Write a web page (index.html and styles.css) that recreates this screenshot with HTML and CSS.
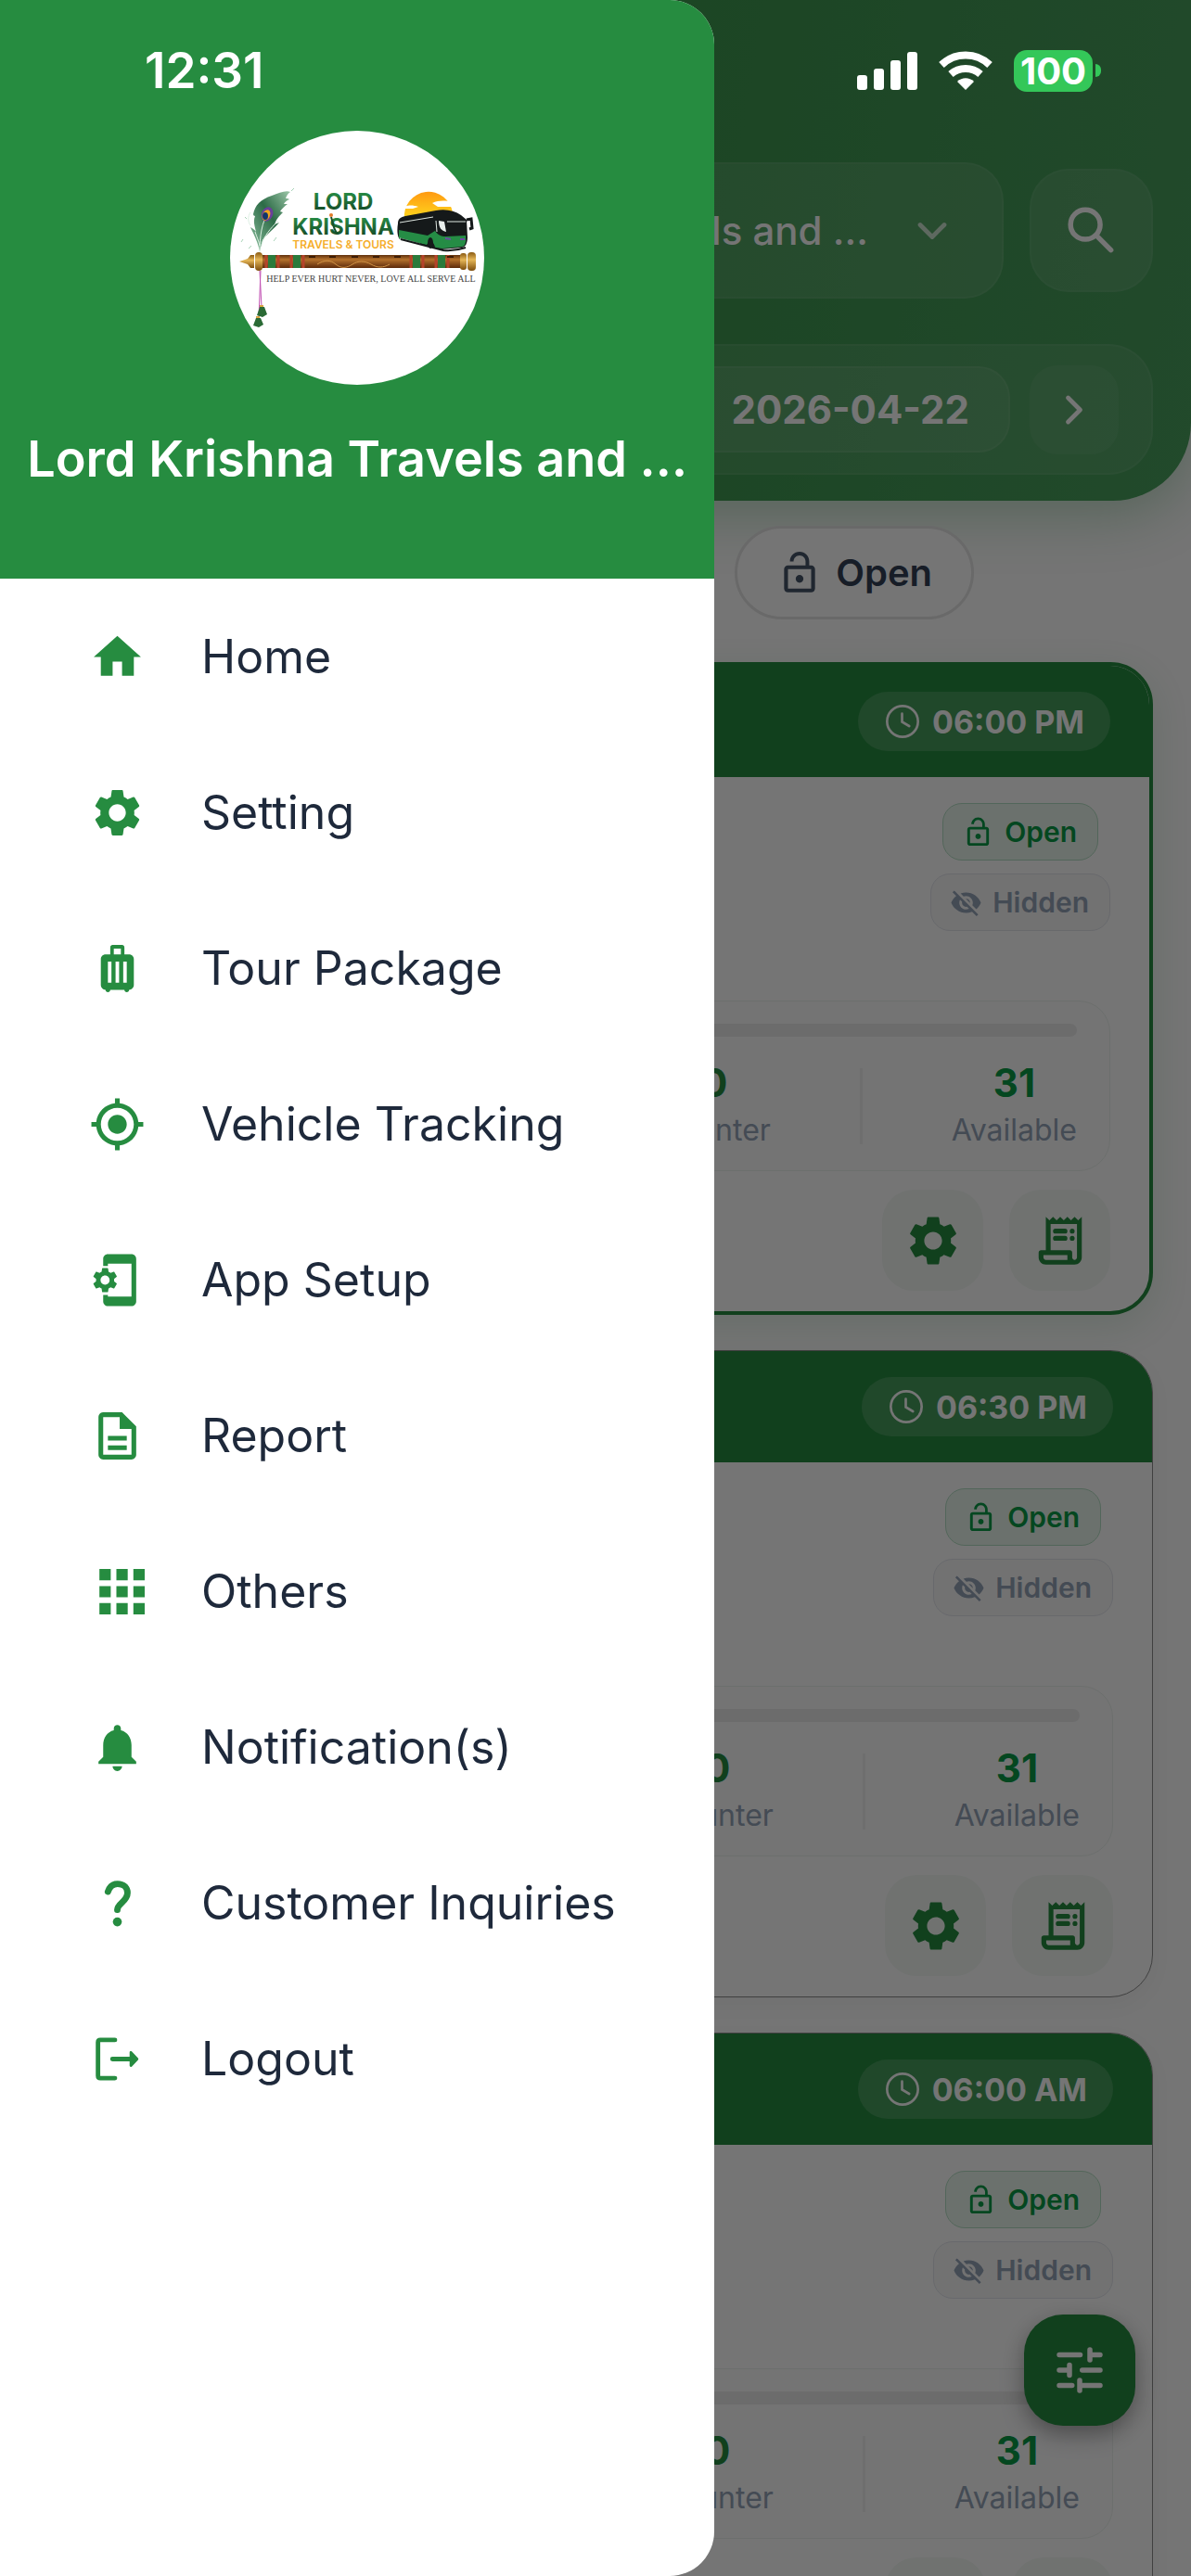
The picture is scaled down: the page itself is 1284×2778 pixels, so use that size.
FILE: index.html
```html
<!DOCTYPE html>
<html lang="en">
<head>
<meta charset="utf-8">
<meta name="viewport" content="width=device-width, initial-scale=1">
<title>Lord Krishna Travels and Tours</title>
<link rel="stylesheet" href="styles.css">
</head>
<body>
<svg class="sprite" aria-hidden="true">
  <symbol id="i-home" viewBox="0 0 24 24"><path d="M10 20v-6h4v6h5v-8h3L12 3 2 12h3v8z"/></symbol>
  <symbol id="i-gear" viewBox="0 0 24 24"><path d="M19.14 12.94c.04-.3.06-.61.06-.94 0-.32-.02-.64-.07-.94l2.03-1.58c.18-.14.23-.41.12-.61l-1.92-3.32c-.12-.22-.37-.29-.59-.22l-2.39.96c-.5-.38-1.03-.7-1.62-.94l-.36-2.54c-.04-.24-.24-.41-.48-.41h-3.84c-.24 0-.43.17-.47.41l-.36 2.54c-.59.24-1.13.57-1.62.94l-2.39-.96c-.22-.08-.47 0-.59.22L2.74 8.87c-.12.21-.08.47.12.61l2.03 1.58c-.05.3-.09.63-.09.94s.02.64.07.94l-2.03 1.58c-.18.14-.23.41-.12.61l1.92 3.32c.12.22.37.29.59.22l2.39-.96c.5.38 1.03.7 1.62.94l.36 2.54c.05.24.24.41.48.41h3.84c.24 0 .44-.17.47-.41l.36-2.54c.59-.24 1.13-.56 1.62-.94l2.39.96c.22.08.47 0 .59-.22l1.92-3.32c.12-.22.07-.47-.12-.61l-2.01-1.58zM12 15.6c-1.98 0-3.6-1.62-3.6-3.6s1.62-3.6 3.6-3.6 3.6 1.62 3.6 3.6-1.62 3.6-3.6 3.6z"/></symbol>
  <symbol id="i-luggage" viewBox="0 0 24 24"><path d="M17 6h-2V3c0-.55-.45-1-1-1h-4c-.55 0-1 .45-1 1v3H7c-1.1 0-2 .9-2 2v11c0 1.1.9 2 2 2 0 .55.45 1 1 1s1-.45 1-1h6c0 .55.45 1 1 1s1-.45 1-1c1.1 0 2-.9 2-2V8c0-1.1-.9-2-2-2zM9.5 18H8V9h1.5v9zm3.25 0h-1.5V9h1.5v9zm.75-12h-3V3.5h3V6zM16 18h-1.5V9H16v9z"/></symbol>
  <symbol id="i-target" viewBox="0 0 24 24"><path d="M12 8c-2.21 0-4 1.79-4 4s1.79 4 4 4 4-1.79 4-4-1.79-4-4-4zm8.94 3c-.46-4.17-3.77-7.48-7.94-7.94V1h-2v2.06C6.83 3.52 3.52 6.83 3.06 11H1v2h2.06c.46 4.17 3.77 7.48 7.94 7.94V23h2v-2.06c4.17-.46 7.48-3.77 7.94-7.94H23v-2h-2.06zM12 19c-3.87 0-7-3.13-7-7s3.13-7 7-7 7 3.13 7 7-3.13 7-7 7z"/></symbol>
  <symbol id="i-app" viewBox="0 0 24 24"><path d="M8 1h10c1.1 0 2 .9 2 2v18c0 1.1-.9 2-2 2H8c-1.1 0-2-.9-2-2v-2.7h2v.7h10V5H8v1H6V3c0-1.1.9-2 2-2z"/><use href="#i-gear" x="0.4" y="5.6" width="12.8" height="12.8"/></symbol>
  <symbol id="i-report" viewBox="0 0 24 24"><path d="M8 16h8v2H8zm0-4h8v2H8zm6-10H6c-1.1 0-2 .9-2 2v16c0 1.1.89 2 1.99 2H18c1.1 0 2-.9 2-2V8l-6-6zm4 18H6V4h7v5h5v11z"/></symbol>
  <symbol id="i-grid" viewBox="0 0 24 24"><path d="M4.4 2.4h4.8v4.8H4.4zM11.6 2.4h4.8v4.8h-4.8zM18.8 2.4h4.8v4.8h-4.8zM4.4 9.6h4.8v4.8H4.4zM11.6 9.6h4.8v4.8h-4.8zM18.8 9.6h4.8v4.8h-4.8zM4.4 16.8h4.8v4.8H4.4zM11.6 16.8h4.8v4.8h-4.8zM18.8 16.8h4.8v4.8h-4.8z"/></symbol>
  <symbol id="i-bell" viewBox="0 0 24 24"><path d="M12 22c1.1 0 2-.9 2-2h-4c0 1.1.89 2 2 2zm6-6v-5c0-3.07-1.64-5.64-4.5-6.32V4c0-.83-.67-1.5-1.5-1.5s-1.5.67-1.5 1.5v.68C7.63 5.36 6 7.92 6 11v5l-2 2v1h16v-1l-2-2z"/></symbol>
  <symbol id="i-question" viewBox="0 0 24 24"><path d="M8 7.1C8.700 5 10 3.800 12.100 3.800c2.500 0 4.200 1.500 4.200 3.800 0 3.700-4.200 4.300-4.300 7.200" fill="none" stroke="currentColor" stroke-width="2.700" stroke-linecap="round"/><circle cx="12" cy="19.900" r="1.900"/></symbol>
  <symbol id="i-logout" viewBox="0 0 24 24"><path d="M11 3.900H4.800c-.6 0-1 .4-1 1v14.200c0 .6.4 1 1 1H11M9.900 12H18" fill="none" stroke="currentColor" stroke-width="1.900" stroke-linecap="round"/><path d="M17.200 9.200c0-.5.500-.7.900-.4l2.600 2.700c.3.300.3.700 0 1l-2.600 2.700c-.4.300-.9.100-.9-.4z"/></symbol>
  <symbol id="i-unlock" viewBox="0 0 24 24"><path d="M12 17c1.100 0 2-.9 2-2s-.9-2-2-2-2 .9-2 2 .9 2 2 2zm6-9h-1V6c0-2.760-2.240-5-5-5S7 3.240 7 6h1.900c0-1.710 1.390-3.100 3.100-3.100 1.710 0 3.100 1.390 3.100 3.100v2H6c-1.100 0-2 .9-2 2v10c0 1.100.9 2 2 2h12c1.100 0 2-.9 2-2V10c0-1.100-.9-2-2-2zm0 12H6V10h12v10z"/></symbol>
  <symbol id="i-hidden" viewBox="0 0 24 24"><path d="M12 7c2.760 0 5 2.240 5 5 0 .65-.13 1.260-.36 1.830l2.920 2.920c1.510-1.260 2.700-2.890 3.430-4.750-1.730-4.390-6-7.500-11-7.500-1.400 0-2.740.25-3.980.7l2.160 2.160C10.740 7.130 11.350 7 12 7zM2 4.270l2.280 2.280.46.46C3.080 8.300 1.780 10.020 1 12c1.730 4.390 6 7.500 11 7.500 1.550 0 3.030-.3 4.380-.84l.42.42L19.730 22 21 20.730 3.270 3 2 4.270zM7.530 9.800l1.550 1.550c-.05.21-.08.43-.08.65 0 1.660 1.340 3 3 3 .22 0 .44-.03.65-.08l1.550 1.550c-.67.33-1.410.53-2.200.53-2.760 0-5-2.240-5-5 0-.79.2-1.530.53-2.200zm4.310-.78l3.150 3.150.02-.16c0-1.660-1.340-3-3-3l-.17.01z"/></symbol>
  <symbol id="i-receipt" viewBox="0 0 24 24"><path d="M19.500 3.500L18 2l-1.500 1.500L15 2l-1.500 1.500L12 2l-1.500 1.500L9 2 7.500 3.500 6 2v14H4c-.6 0-1 .4-1 1v2c0 1.660 1.340 3 3 3h12c1.660 0 3-1.340 3-3V2l-1.500 1.500zM15 20H6c-.55 0-1-.45-1-1v-1h10v2zm4-1c0 .55-.45 1-1 1s-1-.45-1-1v-2c0-.6-.4-1-1-1H8V5h11v14z"/><path d="M10 8h4M10 11h4M17 8h.01M17 11h.01" stroke="currentColor" stroke-width="2" stroke-linecap="round"/></symbol>
  <symbol id="i-clock" viewBox="0 0 24 24"><path d="M12 2a10 10 0 1 0 0 20 10 10 0 0 0 0-20zM11.700 7v5.300l4.600 2.700" fill="none" stroke="currentColor" stroke-width="1.600" stroke-linecap="round"/></symbol>
  <symbol id="i-search" viewBox="0 0 24 24"><path d="M9.500 3.700a5.800 5.800 0 1 0 0 11.600 5.800 5.800 0 0 0 0-11.600zM14.600 14.600l4.900 4.900" fill="none" stroke="currentColor" stroke-width="2" stroke-linecap="round"/></symbol>
  <symbol id="i-down" viewBox="0 0 24 24"><path d="M6 9l6 6 6-6" fill="none" stroke="currentColor" stroke-width="2.200" stroke-linecap="round" stroke-linejoin="round"/></symbol>
  <symbol id="i-right" viewBox="0 0 24 24"><path d="M9 6l6 6-6 6" fill="none" stroke="currentColor" stroke-width="2.200" stroke-linecap="round" stroke-linejoin="round"/></symbol>
  <symbol id="i-left" viewBox="0 0 24 24"><path d="M15 6l-6 6 6 6" fill="none" stroke="currentColor" stroke-width="2.200" stroke-linecap="round" stroke-linejoin="round"/></symbol>
  <symbol id="i-tune" viewBox="0 0 24 24"><path d="M4 6h8.200M20 6h-4M16 4v4M4 12h4M8 10v4M13 12h7M4 18h5M12 16v4M12 18h8" fill="none" stroke="currentColor" stroke-width="2" stroke-linecap="round"/></symbol>
</svg>

<div class="screen">
  <main class="app">
    <header class="topbar">
      <div class="topbar-row">
        <button class="company" type="button"><span>Travels and …</span><svg class="icon-52"><use href="#i-down"/></svg></button>
        <button class="search" type="button" aria-label="Search"><svg class="icon-66"><use href="#i-search"/></svg></button>
      </div>
      <div class="date-row">
        <button class="step" type="button" aria-label="Previous day"><svg class="icon-52"><use href="#i-left"/></svg></button>
        <button class="date" type="button">2026-04-22</button>
        <button class="step" type="button" aria-label="Next day"><svg class="icon-52"><use href="#i-right"/></svg></button>
      </div>
    </header>

    <div class="filters">
      <button class="chip" type="button"><svg class="icon-50"><use href="#i-unlock"/></svg>Open</button>
    </div>

    <div class="trips">
      <article class="trip trip-active">
        <div class="trip-head"><span class="time"><svg class="icon-40"><use href="#i-clock"/></svg>06:00 PM</span></div>
        <div class="trip-body">
          <div class="tags">
            <span class="tag tag-open"><svg class="icon-35"><use href="#i-unlock"/></svg>Open</span>
            <span class="tag tag-hidden"><svg class="icon-35"><use href="#i-hidden"/></svg>Hidden</span>
          </div>
          <div class="seats">
            <div class="seat-bar"></div>
            <div class="seat-stats">
              <div class="stat"><strong>0</strong><span>Counter</span></div>
              <div class="stat-line"></div>
              <div class="stat stat-free"><strong>31</strong><span>Available</span></div>
            </div>
          </div>
          <div class="actions">
            <button type="button" aria-label="Trip settings"><svg class="icon-64"><use href="#i-gear"/></svg></button>
            <button type="button" aria-label="Trip receipt"><svg class="icon-60"><use href="#i-receipt"/></svg></button>
          </div>
        </div>
      </article>

      <article class="trip">
        <div class="trip-head"><span class="time"><svg class="icon-40"><use href="#i-clock"/></svg>06:30 PM</span></div>
        <div class="trip-body">
          <div class="tags">
            <span class="tag tag-open"><svg class="icon-35"><use href="#i-unlock"/></svg>Open</span>
            <span class="tag tag-hidden"><svg class="icon-35"><use href="#i-hidden"/></svg>Hidden</span>
          </div>
          <div class="seats">
            <div class="seat-bar"></div>
            <div class="seat-stats">
              <div class="stat"><strong>0</strong><span>Counter</span></div>
              <div class="stat-line"></div>
              <div class="stat stat-free"><strong>31</strong><span>Available</span></div>
            </div>
          </div>
          <div class="actions">
            <button type="button" aria-label="Trip settings"><svg class="icon-64"><use href="#i-gear"/></svg></button>
            <button type="button" aria-label="Trip receipt"><svg class="icon-60"><use href="#i-receipt"/></svg></button>
          </div>
        </div>
      </article>

      <article class="trip">
        <div class="trip-head"><span class="time"><svg class="icon-40"><use href="#i-clock"/></svg>06:00 AM</span></div>
        <div class="trip-body">
          <div class="tags">
            <span class="tag tag-open"><svg class="icon-35"><use href="#i-unlock"/></svg>Open</span>
            <span class="tag tag-hidden"><svg class="icon-35"><use href="#i-hidden"/></svg>Hidden</span>
          </div>
          <div class="seats">
            <div class="seat-bar"></div>
            <div class="seat-stats">
              <div class="stat"><strong>0</strong><span>Counter</span></div>
              <div class="stat-line"></div>
              <div class="stat stat-free"><strong>31</strong><span>Available</span></div>
            </div>
          </div>
          <div class="actions">
            <button type="button" aria-label="Trip settings"><svg class="icon-64"><use href="#i-gear"/></svg></button>
            <button type="button" aria-label="Trip receipt"><svg class="icon-60"><use href="#i-receipt"/></svg></button>
          </div>
        </div>
      </article>
    </div>

    <button class="fab" type="button" aria-label="Filters"><svg class="icon-66"><use href="#i-tune"/></svg></button>
  </main>

  <div class="scrim"></div>

  <aside class="drawer">
    <div class="profile">
      <div class="avatar">
        <svg viewBox="0 0 274 274" role="img" aria-label="Lord Krishna Travels &amp; Tours">
          <defs>
            <linearGradient id="leaf" x1="0" y1="0" x2="0" y2="1"><stop offset="0" stop-color="#2b9a4b"/><stop offset="1" stop-color="#123d22"/></linearGradient>
            <linearGradient id="sun" x1="0" y1="0" x2="0" y2="1"><stop offset="0" stop-color="#ff9a12"/><stop offset="1" stop-color="#ffe01f"/></linearGradient>
            <linearGradient id="wood" x1="0" y1="0" x2="0" y2="1"><stop offset="0" stop-color="#5f300c"/><stop offset=".35" stop-color="#b4712c"/><stop offset="1" stop-color="#5c2a0b"/></linearGradient>
            <linearGradient id="brass" x1="0" y1="0" x2="0" y2="1"><stop offset="0" stop-color="#8a5a12"/><stop offset=".4" stop-color="#e6b758"/><stop offset="1" stop-color="#7d4d0d"/></linearGradient>
            <linearGradient id="plume" x1="1" y1="0" x2="0" y2="1"><stop offset="0" stop-color="#9cc7a8"/><stop offset=".45" stop-color="#2c6b46"/><stop offset="1" stop-color="#8fc2a2"/></linearGradient>
          </defs>
          <!-- peacock feather -->
          <path d="M32 130C29 117 25 111 22 104c3 2 5 3 6 5-2-8-3-12-1-17-1 0-2-1-2-2 2-10 8-16 20-20 8-3 15-6 20-4-3 2-4 4-5 7 2 0 3 0 4 1-3 1-5 3-6 5l4 0c-3 2-6 5-8 8l3 1c-4 4-7 7-9 13l5-2c-7 8-14 13-18 19z" fill="url(#plume)"/>
          <path d="M32 131c0-17 2-32 10-45M27 109c2 6 4 10 5 15M52 97c-9 9-15 16-18 26M22 88c-3 4-3 10 0 14" fill="none" stroke="#dcefe2" stroke-width="1"/>
          <path d="M66 65l3-3M16 93l2 2M14 117l-2 3M47 119l3-4M20 127l3-3" stroke="#a9d3b8" stroke-width="1"/>
          <ellipse cx="40" cy="90" rx="6" ry="8" transform="rotate(25 40 90)" fill="#6a3f9b"/>
          <ellipse cx="39" cy="91" rx="4" ry="6" transform="rotate(25 39 91)" fill="#f0a51e"/>
          <ellipse cx="38" cy="92" rx="3" ry="4" fill="#12356e"/>
          <!-- wordmark -->
          <text x="122" y="85" text-anchor="middle" class="mark-name">LORD</text>
          <text x="122" y="112" text-anchor="middle" class="mark-name">KRISHNA</text>
          <path d="M109 93c2 6 2 12 6 17" fill="none" stroke="#16502b" stroke-width="2"/>
          <circle cx="109" cy="91" r="2" fill="#e07b2a"/>
          <text x="122" y="127" text-anchor="middle" class="mark-sub">TRAVELS &amp; TOURS</text>
          <!-- sun and bus -->
          <path d="M188 95a26 26 0 0 1 52-6v10h-52z" fill="url(#sun)"/>
          <path d="M187 82c6-2 10-2 16 0l-6 2h-12zM218 78c7-3 14-3 22-1l4 5h-20z" fill="#fff"/>
          <path d="M181 100c0-5 3-7 8-8l33-6c10-2 20 0 27 5l6 5 1 19c0 6-2 10-6 11l-22 2-37-9-8-2c-3-3-3-11-2-17z" fill="#15191a"/>
          <path d="M182 107l31 6 8-5c3 4 6 6 12 6l21-1c1 7-1 12-4 12l-21 2-8-1c-1-7-6-9-9-3l-30-7z" fill="#258c45"/>
          <path d="M183 99l36-6M222 97l1 12M234 98l20 0M183 116l22 6" stroke="#dfe8e2" stroke-width="1" fill="none"/>
          <path d="M225 97l6 1 2 11c-5-1-8-4-8-12z" fill="#e9efec"/>
          <path d="M255 96l5-1 1 10-3 1" fill="none" stroke="#15191a" stroke-width="3"/>
          <path d="M232 115l6 1v2l-6-1zM248 116h5v2h-5z" fill="#6c4aa3"/>
          <path d="M184 117l46 12c10 1 18-1 24-3" fill="none" stroke="#15191a" stroke-width="2"/>
          <ellipse cx="216" cy="121" rx="3" ry="6" fill="#15191a"/>
          <!-- flute -->
          <rect x="30" y="134" width="220" height="14" fill="url(#wood)"/>
          <path d="M10 141l9-3 3-4h4v14h-4l-3-4z" fill="url(#brass)"/>
          <rect x="27" y="131" width="8" height="20" rx="4" fill="url(#brass)"/>
          <rect x="248" y="132" width="7" height="18" rx="3" fill="url(#brass)"/>
          <rect x="256" y="131" width="9" height="20" rx="4" fill="url(#brass)"/>
          <path d="M39 134v14M52 134v14M66 134v14M79 134v14M195 134v14M208 134v14M222 134v14M235 134v14" stroke="#b5432b" stroke-width="3"/>
          <path d="M45 134v14M72 134v14M201 134v14M228 134v14" stroke="#2c7a3c" stroke-width="8"/>
          <path d="M85 136h7M107 136h7M131 136h7M154 136h7M177 136h7M234 136h7" stroke="#3c1c06" stroke-width="2"/>
          <path d="M94 144c8-5 14-5 20 0s12 4 18 0 13-4 20 0 13 4 20 0" fill="none" stroke="#d09245" stroke-width="1"/>
          <!-- tassels -->
          <path d="M33 151l-2 50M32 151l2 39" stroke="#c253b4" stroke-width="1" fill="none"/>
          <path d="M32 190h5l3 8-5 3-6-2zM28 202h5l3 7-5 3-6-2z" fill="#2a6a35"/>
          <path d="M32 189h4M28 201h4" stroke="#d9a441" stroke-width="2"/>
          <text x="152" y="163" text-anchor="middle" class="mark-motto">HELP EVER HURT NEVER, LOVE ALL SERVE ALL</text>
        </svg>
      </div>
      <h1>Lord Krishna Travels and …</h1>
    </div>
    <nav class="menu">
      <a href="#home"><svg><use href="#i-home"/></svg>Home</a>
      <a href="#setting"><svg><use href="#i-gear"/></svg>Setting</a>
      <a href="#tour"><svg><use href="#i-luggage"/></svg>Tour Package</a>
      <a href="#tracking"><svg><use href="#i-target"/></svg>Vehicle Tracking</a>
      <a href="#app"><svg><use href="#i-app"/></svg>App Setup</a>
      <a href="#report"><svg><use href="#i-report"/></svg>Report</a>
      <a href="#others"><svg><use href="#i-grid"/></svg>Others</a>
      <a href="#notifications"><svg><use href="#i-bell"/></svg>Notification(s)</a>
      <a href="#inquiries"><svg><use href="#i-question"/></svg>Customer Inquiries</a>
      <a href="#logout"><svg><use href="#i-logout"/></svg>Logout</a>
    </nav>
  </aside>

  <div class="status">
    <span class="clock">12:31</span>
    <div class="status-icons">
      <svg class="signal" viewBox="0 0 65 41"><rect y="25" width="11" height="16" rx="3"/><rect x="18" y="18" width="11" height="23" rx="3"/><rect x="36" y="9" width="11" height="32" rx="3"/><rect x="54" y="0" width="11" height="41" rx="3"/></svg>
      <svg class="wifi" viewBox="0 0 58 42"><path d="M29 42l-9-9c5-5 13-5 18 0z"/><path d="M13 25c9-8 23-8 32 0" fill="none" stroke="#fff" stroke-width="8"/><path d="M3 15C17.500 1 40.500 1 55 15" fill="none" stroke="#fff" stroke-width="8"/></svg>
      <div class="battery"><span>100</span></div>
    </div>
  </div>
</div>
</body>
</html>
```

FILE: styles.css
```css
:root {
  --green: #268c40;
  --emerald: #0a9b46;
  --slate: #94a3b8;
}

* { box-sizing: border-box; }

body {
  margin: 0;
  font-family: "Inter", "Liberation Sans", sans-serif;
  color: #1e293b;
}

button {
  font: inherit;
  color: inherit;
  border: 0;
  padding: 0;
  background: none;
  display: flex;
  align-items: center;
  justify-content: center;
}

svg { fill: currentColor; flex: none; display: block; }
.sprite { display: none; }
.icon-35 { width: 35px; height: 35px; }
.icon-40 { width: 40px; height: 40px; }
.icon-50 { width: 50px; height: 50px; }
.icon-52 { width: 52px; height: 52px; }
.icon-60 { width: 62px; height: 62px; }
.icon-64 { width: 64px; height: 64px; }
.icon-66 { width: 66px; height: 66px; }

.screen {
  position: relative;
  height: 100vh;
  overflow: hidden;
  background: #fefefe;
}

/* Top bar */
.topbar {
  display: flex;
  flex-direction: column;
  gap: 49px;
  padding: 175px 41px 28px;
  border-radius: 0 0 84px 84px;
  color: #fff;
  background: linear-gradient(100deg, #2f9048, #3f9951 60%, #4aa15f);
  box-shadow: 0 16px 60px rgba(38, 140, 64, .3);
}

.topbar-row { display: flex; align-items: center; gap: 28px; }

.company {
  flex: 1;
  height: 147px;
  justify-content: flex-end;
  gap: 43px;
  padding-right: 49px;
  border: 2px solid rgba(255, 255, 255, .05);
  border-radius: 42px;
  background: rgba(255, 255, 255, .1);
  font-size: 42px;
  font-weight: 500;
}
.company svg { opacity: .7; }

.search {
  width: 133px;
  height: 133px;
  border: 2px solid rgba(255, 255, 255, .04);
  border-radius: 42px;
  background: rgba(255, 255, 255, .1);
}

.date-row {
  display: flex;
  align-items: center;
  gap: 21px;
  height: 141px;
  padding: 0 35px;
  border: 2px solid rgba(255, 255, 255, .05);
  border-radius: 48px;
  background: rgba(255, 255, 255, .08);
}

.step {
  width: 96px;
  height: 96px;
  border-radius: 30px;
  background: rgba(255, 255, 255, .06);
}

.date {
  flex: 1;
  height: 93px;
  justify-content: flex-end;
  padding-right: 42px;
  border: 2px solid rgba(255, 255, 255, .06);
  border-radius: 34px;
  background: rgba(255, 255, 255, .08);
  font-size: 42px;
  font-weight: 700;
}

/* Filter chips */
.filters {
  position: relative;
  display: flex;
  justify-content: flex-end;
  padding: 27px 234px 46px 41px;
}

.chip {
  height: 101px;
  gap: 14px;
  padding: 0 42px;
  border: 3px solid #e5e5e5;
  border-radius: 51px;
  background: #fff;
  color: #334155;
  font-size: 40px;
  font-weight: 600;
}
.chip svg { color: #475569; }

/* Trip cards */
.trips {
  display: flex;
  flex-direction: column;
  gap: 38px;
  padding: 0 41px;
}

.trip {
  overflow: hidden;
  border: 1px solid #8c8c8c;
  border-radius: 46px;
  background: #fff;
  box-shadow: 0 8px 24px rgba(0, 0, 0, .04);
}
.trip-active {
  border: 4px solid var(--green);
  box-shadow: 0 12px 40px rgba(38, 140, 64, .14);
}

.trip-head {
  display: flex;
  justify-content: flex-end;
  padding: 28px 42px;
  background: var(--green);
}

.time {
  display: flex;
  align-items: center;
  gap: 12px;
  height: 64px;
  padding: 0 28px;
  border-radius: 32px;
  background: rgba(255, 255, 255, .15);
  color: #fff;
  font-size: 34px;
  font-weight: 700;
}

.trip-body {
  display: flex;
  flex-direction: column;
  padding: 28px 42px 22px;
}

.tags {
  display: flex;
  flex-direction: column;
  align-items: center;
  align-self: flex-end;
  gap: 14px;
  margin-bottom: 75px;
}

.tag {
  display: flex;
  align-items: center;
  gap: 11px;
  height: 62px;
  padding: 0 22px 0 20px;
  border: 1px solid;
  border-radius: 21px;
  font-size: 30px;
  font-weight: 600;
}
.tag-open {
  color: var(--emerald);
  background: #eaf6ee;
  border-color: #b4dec4;
}
.tag-hidden {
  color: var(--slate);
  background: #f8f8f9;
  border-color: #e3e5ec;
}

.seats {
  display: flex;
  flex-direction: column;
  gap: 24px;
  height: 184px;
  padding: 24px 35px 0;
  border: 1px solid #ecf2ee;
  border-radius: 34px;
  background: #fcfcfd;
}

.seat-bar {
  flex: none;
  height: 14px;
  border-radius: 7px;
  background: #ececec;
}

.seat-stats {
  display: flex;
  align-items: center;
  justify-content: flex-end;
  gap: 96px;
}

.stat {
  display: flex;
  flex-direction: column;
  align-items: center;
  color: var(--green);
}
.stat strong { font-size: 42px; line-height: 52px; font-weight: 700; }
.stat span { font-size: 32px; line-height: 50px; color: var(--slate); }
.stat-free { color: var(--emerald); }

.stat-line {
  width: 3px;
  height: 82px;
  background: #f0f0f0;
}

.actions {
  display: flex;
  justify-content: flex-end;
  gap: 28px;
  margin-top: 20px;
}
.actions button {
  width: 109px;
  height: 109px;
  border-radius: 34px;
  background: #f3f8f5;
  color: var(--green);
}

.fab {
  position: absolute;
  right: 60px;
  bottom: 162px;
  width: 120px;
  height: 120px;
  border-radius: 42px;
  background: var(--green);
  color: #fff;
  box-shadow: 0 9px 24px rgba(0, 0, 0, .35);
}

.scrim {
  position: absolute;
  inset: 0;
  background: rgba(0, 0, 0, .54);
}

/* Navigation drawer */
.drawer {
  position: absolute;
  top: 0;
  bottom: 0;
  left: 0;
  width: 60%;
  overflow: hidden;
  border-radius: 0 48px 48px 0;
  background: #fff;
}

.profile {
  display: flex;
  flex-direction: column;
  align-items: center;
  gap: 42px;
  padding: 141px 20px 91px;
  background: var(--green);
  color: #fff;
}

.avatar {
  width: 274px;
  height: 274px;
  overflow: hidden;
  border-radius: 50%;
  background: #fff;
}
.mark-name { font-size: 24px; font-weight: 700; fill: url(#leaf); }
.mark-sub { font-size: 12px; font-weight: 600; fill: #f5ad2a; }
.mark-motto { font-family: "Liberation Serif", serif; font-size: 10px; fill: #444; }

.profile h1 {
  margin: 0;
  font-size: 54px;
  line-height: 76px;
  font-weight: 600;
  white-space: nowrap;
}

.menu { display: flex; flex-direction: column; }
.menu a {
  display: flex;
  align-items: center;
  gap: 60px;
  height: 168px;
  padding-left: 96px;
  color: inherit;
  font-size: 50px;
  text-decoration: none;
  white-space: nowrap;
}
.menu svg { width: 61px; height: 61px; color: var(--green); }

/* Status bar */
.status {
  position: absolute;
  top: 0;
  left: 0;
  right: 0;
  display: flex;
  align-items: center;
  justify-content: space-between;
  height: 142px;
  padding: 10px 97px 0 156px;
  color: #fff;
}
.clock { font-size: 53px; font-weight: 600; }
.status-icons { display: flex; align-items: center; gap: 23px; }
.signal { width: 65px; height: 41px; }
.wifi { width: 58px; height: 42px; }

.battery { display: flex; align-items: center; gap: 3px; }
.battery span {
  width: 85px;
  height: 45px;
  border-radius: 14px;
  background: #34c759;
  font-size: 40px;
  line-height: 45px;
  font-weight: 700;
  text-align: center;
}
.battery::after {
  content: "";
  width: 6px;
  height: 14px;
  border-radius: 0 7px 7px 0;
  background: #34c759;
}
```
